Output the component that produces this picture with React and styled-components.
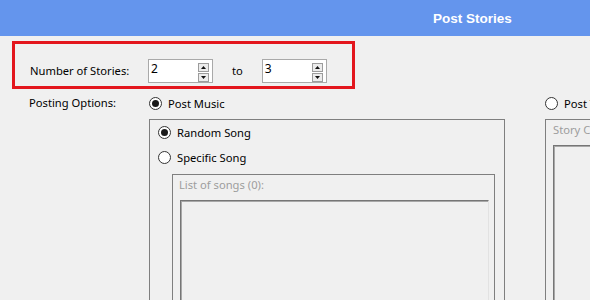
import React from "react";
import styled, { createGlobalStyle } from "styled-components";

const Global = createGlobalStyle`
  html, body { margin: 0; padding: 0; overflow: hidden; background: #f0f0f0; }
  body { font-family: "Segoe UI", "Noto Sans", "Open Sans", sans-serif; font-size: 11.2px; color: #000; }
  * { box-sizing: border-box; }
`;

const Page = styled.div`
  width: 590px;
  height: 300px;
  overflow: hidden;
  display: flex;
  flex-direction: column;
`;

const Header = styled.div`
  height: 36px;
  flex: none;
  background: #6495ed;
  display: flex;
  align-items: center;
  padding-left: 433px;
  color: #fff;
  font-family: "Liberation Sans", Arial, sans-serif;
  font-weight: bold;
  font-size: 13.5px;
`;

const Highlight = styled.div`
  margin: 5px 0 0 12px;
  width: 343px;
  height: 48px;
  border: 3px solid #e3161d;
  display: flex;
  align-items: center;
  padding: 11px 0 0 15px;
  flex: none;
`;

const FieldLabel = styled.span`
  width: ${(p) => p.$w}px;
  flex: none;
  line-height: 16px;
`;

const Spinner = styled.div`
  width: 65px;
  height: 24px;
  background: #fff;
  border: 1px solid #a9a9a9;
  display: flex;
  align-items: flex-start;
  justify-content: space-between;
  padding: 1px 3px 0 2px;
  flex: none;
`;

const SpinValue = styled.span`
  line-height: 16px;
  font-size: 12px;
`;

const SpinButtons = styled.div`
  margin-top: 2px;
  width: 11px;
  display: flex;
  flex-direction: column;
`;

const SpinButton = styled.div`
  height: 9px;
  border: 1px solid #9c9c9c;
  background: #ececec;
  display: flex;
  align-items: center;
  justify-content: center;
  & + & { margin-top: 1px; }
  svg { display: block; }
`;

const Between = styled.span`
  margin: 0 19px 0 19px;
  line-height: 16px;
`;

const Options = styled.div`
  margin-top: 6px;
  display: grid;
  grid-template-columns: 149px 356px 300px;
  flex: none;
`;

const SideLabel = styled.div`
  padding-left: 29px;
  line-height: 16px;
`;

const Column = styled.div`
  display: flex;
  flex-direction: column;
  gap: 8px;
  margin-left: ${(p) => p.$ml || 0}px;
`;

const RadioRow = styled.label`
  display: flex;
  align-items: center;
  height: 16px;
  gap: 6px;
  margin-left: ${(p) => p.$indent || 0}px;
  white-space: nowrap;
`;

const RadioCircle = styled.span`
  width: 13px;
  height: 13px;
  border-radius: 50%;
  border: 1px solid #333;
  background: #fff;
  display: flex;
  align-items: center;
  justify-content: center;
  flex: none;
  &::after {
    content: "";
    width: 7px;
    height: 7px;
    border-radius: 50%;
    background: #1a1a1a;
    display: ${(p) => (p.$on ? "block" : "none")};
  }
`;

const GroupBox = styled.div`
  border: 1px solid #7f7f7f;
  height: ${(p) => p.$h}px;
  display: flex;
  flex-direction: column;
  padding: ${(p) => p.$pad};
  margin-left: ${(p) => p.$ml || 0}px;
`;

const Stack = styled.div`
  display: flex;
  flex-direction: column;
  gap: 9px;
`;

const DimLabel = styled.div`
  color: #9d9d9d;
  line-height: 16px;
  white-space: nowrap;
`;

const ListArea = styled.div`
  margin-top: 7px;
  flex: 1;
  border: 1px solid;
  border-color: #767676 #e2e2e2 #e2e2e2 #767676;
  box-shadow: inset 1px 1px 0 #a8a8a8;
  margin-left: ${(p) => p.$ml || 0}px;
`;

const Arrow = ({ up }) => (
  <svg width="5" height="3" viewBox="0 0 5 3">
    <path d={up ? "M0 3 L2.5 0 L5 3 Z" : "M0 0 L2.5 3 L5 0 Z"} fill="#111" />
  </svg>
);

const NumberSpin = ({ value }) => (
  <Spinner>
    <SpinValue>{value}</SpinValue>
    <SpinButtons>
      <SpinButton><Arrow up /></SpinButton>
      <SpinButton><Arrow /></SpinButton>
    </SpinButtons>
  </Spinner>
);

const Radio = ({ on, children, indent }) => (
  <RadioRow $indent={indent}>
    <RadioCircle $on={on} />
    {children}
  </RadioRow>
);

export default function App() {
  return (
    <Page>
      <Global />
      <Header>Post Stories</Header>
      <Highlight>
        <FieldLabel $w={118}>Number of Stories:</FieldLabel>
        <NumberSpin value="2" />
        <Between>to</Between>
        <NumberSpin value="3" />
      </Highlight>
      <Options>
        <SideLabel>Posting Options:</SideLabel>
        <Column>
          <Radio on>Post Music</Radio>
          <GroupBox $h={200} $pad="4px 9px 0 7px">
            <Stack>
              <Radio on indent={1}>Random Song</Radio>
              <Radio indent={1}>Specific Song</Radio>
              <GroupBox $h={140} $pad="2px 5px 0 6px" $ml={15}>
                <DimLabel>List of songs (0):</DimLabel>
                <ListArea $ml={1} />
              </GroupBox>
            </Stack>
          </GroupBox>
        </Column>
        <Column $ml={40}>
          <Radio>Post Text Story</Radio>
          <GroupBox $h={200} $pad="2px 0 0 7px">
            <DimLabel>Story Content:</DimLabel>
            <ListArea />
          </GroupBox>
        </Column>
      </Options>
    </Page>
  );
}
